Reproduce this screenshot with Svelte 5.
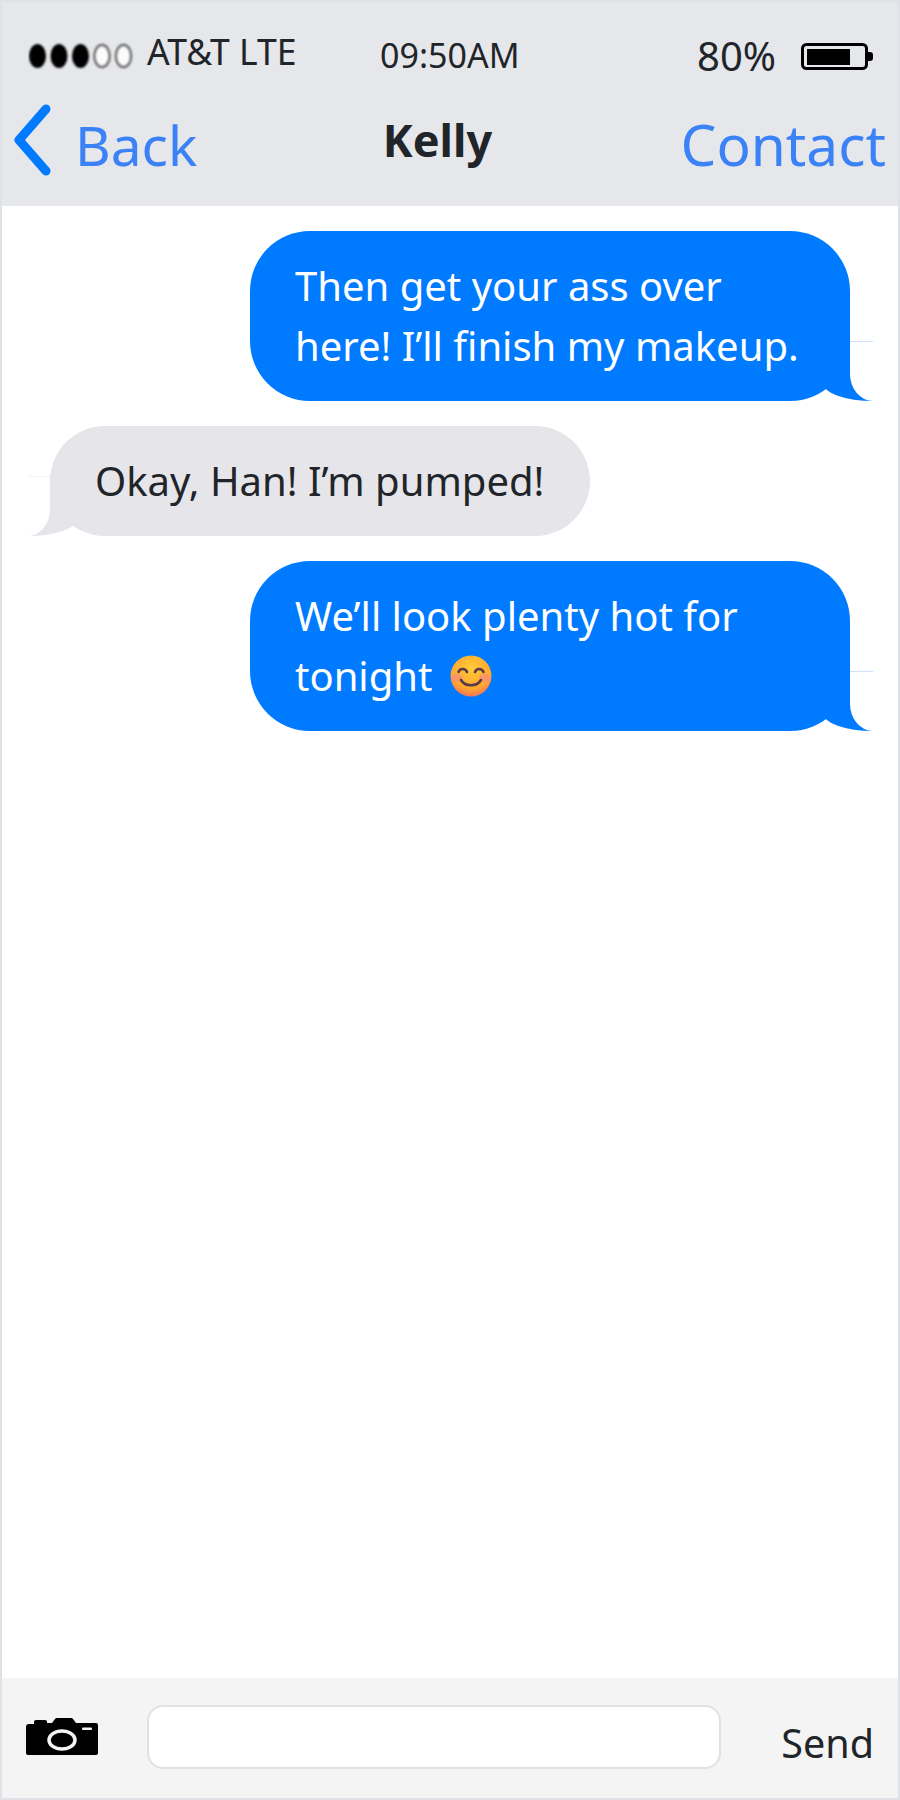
<script>
  const messages = [
    { id: 1, me: true, lines: ['Then get your ass over', 'here! I’ll finish my makeup.'] },
    { id: 2, me: false, lines: ['Okay, Han! I’m pumped!'] },
    { id: 3, me: true, lines: ['We’ll look plenty hot for', 'tonight'], emoji: true }
  ];
  const signal = [true, true, true, false, false];
</script>

<div class="phone">
  <header class="top">
    <div class="status">
      <div class="carrier">
        <svg class="dots" width="108" height="28" viewBox="0 0 108 28">
          <defs>
            <filter id="soft"><feGaussianBlur stdDeviation="1" /></filter>
          </defs>
          <g filter="url(#soft)">
            {#each signal as on, i}
              {#if on}
                <ellipse cx={9.500 + i * 21.500} cy="14" rx="8.500" ry="12" fill="#000" />
              {:else}
                <ellipse cx={9.500 + i * 21.500} cy="14" rx="7.500" ry="11" fill="#fbfbfb" stroke="#666" stroke-width="2.500" />
              {/if}
            {/each}
          </g>
        </svg>
        <span class="carrier-name">AT&amp;T LTE</span>
      </div>
      <span class="clock">09:50AM</span>
      <div class="power">
        <span class="percent">80%</span>
        <svg class="battery" width="72" height="28" viewBox="0 0 72 28">
          <rect x="1.500" y="1.500" width="64" height="24" rx="4" fill="none" stroke="#000" stroke-width="3" />
          <rect x="6" y="6" width="43" height="16" fill="#000" />
          <path d="M67 9h2a3 3 0 0 1 3 3v3a3 3 0 0 1-3 3h-2z" fill="#000" />
        </svg>
      </div>
    </div>
    <nav class="nav">
      <a class="back" href="#back">
        <svg class="chevron" width="38" height="72" viewBox="0 0 38 72">
          <path d="M32 5 5 36l27 31" fill="none" stroke="#007bff" stroke-width="9" stroke-linecap="round" stroke-linejoin="round" />
        </svg>
        <span>Back</span>
      </a>
      <span class="title">Kelly</span>
      <a class="contact" href="#contact">Contact</a>
    </nav>
  </header>

  <main class="thread">
    {#each messages as msg (msg.id)}
      <div class="bubble" class:me={msg.me} class:them={!msg.me}>
        {#each msg.lines as line, i}
          <div class="line">
            {line}
            {#if msg.emoji && i === msg.lines.length - 1}
              <svg class="emoji" width="42" height="42" viewBox="0 0 42 42">
                <defs>
                  <radialGradient id="face" cx="50%" cy="32%" r="72%">
                    <stop offset="0%" stop-color="#ffc93a" />
                    <stop offset="68%" stop-color="#ffa92e" />
                    <stop offset="100%" stop-color="#f7685f" />
                  </radialGradient>
                </defs>
                <circle cx="21" cy="21" r="20.500" fill="url(#face)" />
                <ellipse cx="7" cy="23" rx="6" ry="4" fill="#f98a7c" opacity="0.7" />
                <ellipse cx="35" cy="23" rx="6" ry="4" fill="#f98a7c" opacity="0.7" />
                <path d="M8.500 17c1.500-4 7-4 8.500 0M25 17c1.500-4 7-4 8.500 0M11 25c4 7 16 7 20 0" fill="none" stroke="#5a3a4a" stroke-width="2.600" stroke-linecap="round" />
              </svg>
            {/if}
          </div>
        {/each}
      </div>
    {/each}
  </main>

  <footer class="composer">
    <svg class="camera" width="72" height="38" viewBox="0 0 72 38">
      <path d="M3 6h5V3.500Q8 2 10 2h9q2 0 2 1.500V5h5l3-4q.5-1 2-1h14q1.500 0 2 1l3 4h20q2 0 2 2v28q0 2-2 2H2q-2 0-2-2V9q0-3 3-3z" fill="#000" />
      <ellipse cx="36" cy="22" rx="13" ry="9" fill="none" stroke="#f4f4f5" stroke-width="3.500" />
      <rect x="56" y="9.500" width="10" height="2.500" rx="1" fill="#f4f4f5" />
    </svg>
    <input class="field" type="text" aria-label="Message" />
    <span class="send">Send</span>
  </footer>
</div>

<style>
  :global(body) {
    margin: 0;
    background: #fff;
  }
  .phone {
    box-sizing: border-box;
    width: 900px;
    height: 1800px;
    border: 2px solid #dee2e6;
    display: flex;
    flex-direction: column;
    font-family: "Noto Sans", "Open Sans", sans-serif;
    color: #212529;
    background: #fff;
  }
  .top {
    height: 204px;
    background: #e5e7eb;
    flex-shrink: 0;
  }
  .status {
    box-sizing: border-box;
    height: 88px;
    display: flex;
    align-items: center;
    padding: 18px 25px 0 26px;
  }
  .carrier {
    display: flex;
    align-items: center;
    gap: 11px;
    width: 352px;
  }
  .dots {
    flex-shrink: 0;
    margin-top: 2px;
  }
  .carrier-name {
    font-size: 35.500px;
    margin-top: -8px;
    white-space: nowrap;
  }
  .clock {
    font-size: 34px;
    white-space: nowrap;
  }
  .power {
    display: flex;
    align-items: center;
    justify-content: flex-end;
    gap: 25px;
    margin-left: auto;
  }
  .percent {
    font-size: 40px;
  }
  .battery {
    margin-top: 4px;
  }
  .nav {
    height: 108px;
    display: flex;
    align-items: center;
    justify-content: space-between;
    padding: 0 12px 0 12px;
  }
  .back {
    display: flex;
    align-items: center;
    gap: 23px;
    font-size: 55px;
    color: #3b82f6;
    text-decoration: none;
  }
  .chevron {
    margin-top: -8px;
  }
  .title {
    font-size: 45px;
    font-weight: 700;
    margin-top: -10px;
    margin-right: 3px;
  }
  .contact {
    font-size: 56.800px;
    color: #3b82f6;
    text-decoration: none;
  }
  .thread {
    flex: 1;
    display: flex;
    flex-direction: column;
    gap: 25px;
    padding: 25px 0 0;
  }
  .bubble {
    position: relative;
    box-sizing: border-box;
    padding: 25px 45px;
    font-size: 40px;
    line-height: 60px;
    border-radius: 60px;
    white-space: nowrap;
  }
  .line {
    display: flex;
    align-items: center;
    gap: 18px;
  }
  .emoji {
    flex-shrink: 0;
  }
  .me {
    align-self: flex-end;
    width: 600px;
    margin-right: 48px;
    background: #007aff;
    color: #fff;
  }
  .them {
    align-self: flex-start;
    margin-left: 48px;
    width: 540px;
    background: #e5e5ea;
  }
  /* tail: coloured block with a cut corner, white block on top */
  .me::before,
  .me::after,
  .them::before,
  .them::after {
    content: "";
    position: absolute;
    bottom: 0;
    height: 60px;
    box-sizing: border-box;
  }
  .me::before {
    right: -23px;
    width: 50px;
    background: #007aff;
    border-bottom-left-radius: 50px 18px;
  }
  .me::after {
    right: -23px;
    width: 23px;
    background: #fff;
    border-top: 1px solid #cfe2fb;
    border-bottom-left-radius: 23px 27px;
  }
  .them::before {
    left: -22px;
    width: 50px;
    background: #e5e5ea;
    border-bottom-right-radius: 50px 18px;
  }
  .them::after {
    left: -22px;
    width: 22px;
    background: #fff;
    border-top: 1px solid #f5f5f7;
    border-bottom-right-radius: 22px 27px;
  }
  .composer {
    height: 120px;
    flex-shrink: 0;
    background: #f4f4f5;
    display: flex;
    align-items: center;
    padding: 0 24px 0 24px;
  }
  .camera {
    flex-shrink: 0;
    margin-top: -2px;
  }
  .field {
    box-sizing: border-box;
    width: 574px;
    height: 64px;
    margin: -2px 0 0 49px;
    background: #fff;
    border: 2px solid #dee2e6;
    border-radius: 16px;
    padding: 0;
    outline: none;
  }
  .send {
    margin-left: auto;
    margin-top: 9px;
    font-size: 39.500px;
  }
</style>
